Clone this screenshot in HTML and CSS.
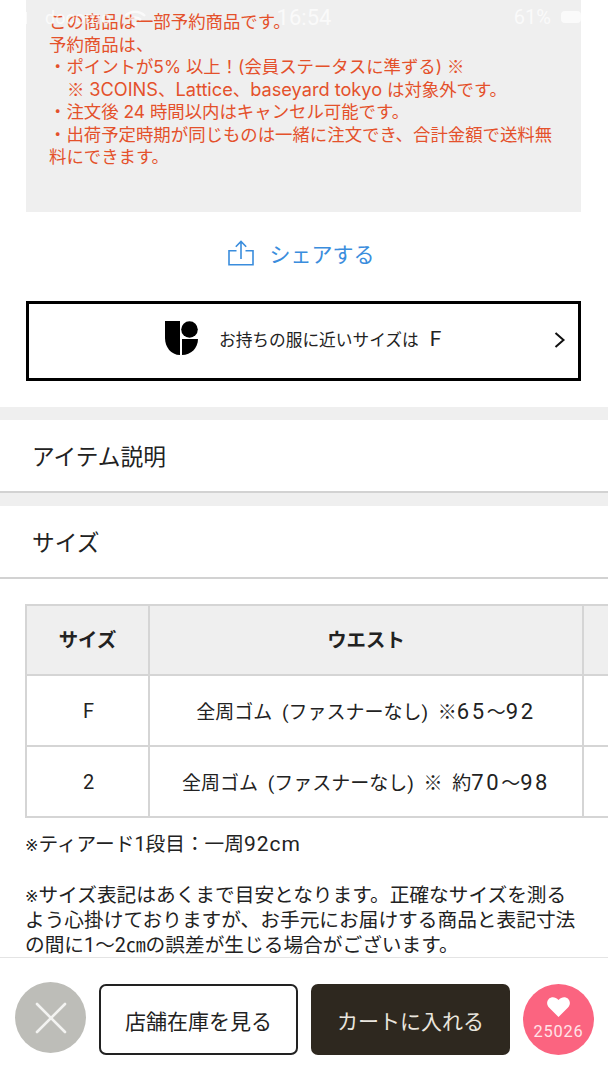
FILE: index.html
```html
<!DOCTYPE html>
<html lang="ja">
  <head>
    <meta charset="UTF-8" />
    <meta name="viewport" content="width=device-width, initial-scale=1.0" />
    <title>商品詳細</title>
    <link rel="stylesheet" href="styles.css">
  </head>
  <body>
    <div class="status">
      <div class="status-left">
        <svg class="signal" width="28" height="12" viewBox="0 0 28 12"><rect x="1" y="7" width="4" height="5" /><rect x="7" y="5" width="4" height="7" /><rect x="13" y="3" width="4" height="9" /><rect x="19" y="0" width="4" height="12" /></svg>
        <span class="carrier">docomo</span>
        <svg class="wifi" width="22" height="16" viewBox="0 0 22 16"><path d="M1 6a14 14 0 0 1 20 0M5 10a8.500 8.500 0 0 1 12 0" fill="none" stroke="#fff" stroke-width="2.500" /><circle cx="11" cy="14" r="2" /></svg>
      </div>
      <div class="status-time">16:54</div>
      <div class="status-right">
        <span>61%</span>
        <div class="battery"></div>
      </div>
    </div>

    <section class="note">
      <p>この商品は一部予約商品です。</p>
      <p>予約商品は、</p>
      <p>・ポイントが5% 以上！(会員ステータスに準ずる) <span class="cjk">※</span></p>
      <p class="indent"><span class="cjk">※</span> <span class="note-latin">3COINS</span>、<span class="note-latin">Lattice</span>、<span class="note-latin">baseyard tokyo</span> は対象外です。</p>
      <p>・注文後 24 時間以内はキャンセル可能です。</p>
      <p>・出荷予定時期が同じものは一緒に注文でき、合計金額で送料無料にできます。</p>
    </section>

    <a class="share">
      <svg width="26" height="26" viewBox="0 0 26 26" fill="none" stroke="#3a8ddd" stroke-width="1.600">
        <path d="M8.500 10.800H1v14h24v-14h-7.500" />
        <path d="M13 19V1.500M7.800 6.700 13 1.500l5.200 5.200" />
      </svg>
      <span>シェアする</span>
    </a>

    <a class="fit">
      <svg class="fit-logo" width="33" height="34" viewBox="0 0 33 34">
        <path d="M0 0H15V34C6 34 0 26 0 17Z" />
        <circle cx="24.500" cy="8.500" r="8.300" />
        <path d="M17 18H33C33 27 26 34 17 34Z" />
      </svg>
      <span class="fit-text">お持ちの服に近いサイズは</span>
      <span class="fit-size">F</span>
      <svg class="fit-arrow" width="12" height="16" viewBox="0 0 12 16" fill="none" stroke="#111" stroke-width="2"><path d="M1.500 1 9.500 8l-8 7" /></svg>
    </a>

    <div class="acc acc-first">アイテム説明</div>
    <div class="acc">サイズ</div>

    <div class="table-wrap">
      <table class="size-table">
        <tr><th class="col-size">サイズ</th><th class="col-waist">ウエスト</th><th></th></tr>
        <tr><td class="size-name">F</td><td>全周ゴム (ファスナーなし) ※<span class="num">65</span>～<span class="num">92</span></td><td></td></tr>
        <tr><td class="size-name">2</td><td>全周ゴム (ファスナーなし) ※ 約<span class="num">70</span>～<span class="num">98</span></td><td></td></tr>
      </table>
    </div>

    <section class="remarks">
      <p><span class="mark">※</span>ティアード1段目：一周<span class="latin">92cm</span></p>
      <p>&nbsp;</p>
      <p><span class="mark">※</span>サイズ表記はあくまで目安となります。正確なサイズを測るよう心掛けておりますが、お手元にお届けする商品と表記寸法の間に1～2㎝の誤差が生じる場合がございます。</p>
    </section>

    <div class="action-bar">
      <button class="close">
        <svg width="32" height="32" viewBox="0 0 32 32" stroke="#f3f3f1" stroke-width="2.600" stroke-linecap="round"><path d="M2 2 30 30M30 2 2 30" /></svg>
      </button>
      <button class="btn btn-store">店舗在庫を見る</button>
      <button class="btn btn-cart">カートに入れる</button>
      <button class="like">
        <svg width="23" height="20" viewBox="0 0 23 20"><path d="M11.500 20 2 10.500C-.5 8-.5 4 2 1.700 4.500-.6 8.500-.4 11.500 3c3-3.400 7-3.600 9.500-1.300 2.500 2.300 2.500 6.300 0 8.800Z" fill="#fff" /></svg>
        <span>25026</span>
      </button>
    </div>
  </body>
</html>
```

FILE: styles.css
```css
* {
  box-sizing: border-box;
}

html,
body {
  margin: 0;
  height: 1080px;
  overflow: hidden;
  background: white;
}

body {
  position: relative;
  font-family: Roboto, "Noto Sans CJK JP", sans-serif;
  color: #222;
}

p {
  margin: 0;
}

/* status bar over the page */
.status {
  position: absolute;
  top: 5px;
  left: 0;
  width: 100%;
  height: 24px;
  color: #fff;
  fill: #fff;
  font-size: 20px;
  opacity: 0.7;
}

.status-left {
  position: absolute;
  left: 4px;
  top: 2px;
  display: flex;
  align-items: center;
  gap: 13px;
}

.carrier {
  font-size: 18px;
}

.status-time {
  position: absolute;
  left: 0;
  width: 100%;
  top: 0;
  text-align: center;
  font-size: 22px;
}

.status-right {
  position: absolute;
  right: 27px;
  top: 0;
  display: flex;
  align-items: center;
  gap: 10px;
}

.battery {
  width: 20px;
  height: 12px;
  border-radius: 4px;
  background: #fff;
}

.note {
  margin: 0 27px 0 26px;
  height: 212px;
  padding: 11px 22px 0 23px;
  background: #efefef;
  color: #e4512b;
  font-family: Inter, "Noto Sans CJK JP", sans-serif;
  font-size: 17.400px;
  line-height: 22.500px;
}

.indent {
  padding-left: 18px;
}

.cjk {
  font-family: "Noto Sans CJK JP", sans-serif;
  line-height: 1;
}

.note-latin {
  font-size: 18.200px;
  line-height: 1;
}

.share {
  height: 89px;
  padding: 0 6px 8px 0;
  display: flex;
  align-items: center;
  justify-content: center;
  gap: 16px;
  color: #3a8ddd;
  font-size: 21px;
}

.fit {
  margin: 0 27px 0 26px;
  height: 80px;
  border: 3px solid #000;
  display: flex;
  align-items: center;
  padding: 0 12px 0 136px;
}

.fit-logo {
  flex: none;
  margin-bottom: 6px;
}

.fit-text {
  margin-left: 21px;
  margin-bottom: 5px;
  font-size: 16.700px;
}

.fit-size {
  margin-left: 11px;
  margin-bottom: 5px;
  font-size: 21px;
}

.fit-arrow {
  margin-left: auto;
  margin-bottom: 2px;
}

.acc {
  height: 86px;
  border-top: 13px solid #efefef;
  border-bottom: 2px solid #d2d2d2;
  padding-left: 32px;
  display: flex;
  align-items: center;
  font-size: 22.700px;
}

.acc-first {
  margin-top: 26px;
}

.table-wrap {
  margin: 25px 0 0 25px;
  overflow: hidden;
}

.size-table {
  width: 700px;
  table-layout: fixed;
  border-collapse: collapse;
  font-size: 19px;
  word-spacing: 5px;
}

.size-table th,
.size-table td {
  height: 71px;
  border: 2px solid #d5d5d5;
  text-align: center;
  padding: 0;
  font-weight: normal;
}

.size-table th {
  height: 70px;
  padding-bottom: 4px;
  background: #efefef;
  font-size: 19.400px;
  font-weight: bold;
}

.size-table .size-name {
  font-size: 20px;
  padding-left: 2px;
}

.num {
  font-size: 22px;
  letter-spacing: 2.600px;
}

.col-size {
  width: 123px;
}

.col-waist {
  width: 434px;
}

.remarks {
  margin: 14px 28px 0 25px;
  font-size: 19.700px;
  line-height: 25.300px;
}

.mark {
  font-family: "DejaVu Sans", sans-serif;
  font-size: 16px;
  line-height: 1;
}

.latin {
  font-size: 21px;
  letter-spacing: 1px;
  line-height: 1;
}

/* bottom buttons stay on top of the content */
.action-bar {
  position: absolute;
  left: 0;
  bottom: 0;
  width: 100%;
  height: 123px;
  padding: 24px 14px 0 15px;
  background: white;
  border-top: 1px solid #e4e4e4;
  display: flex;
  align-items: flex-start;
  gap: 13px;
}

.action-bar button {
  margin: 0;
  padding: 0;
  font-family: inherit;
  cursor: pointer;
}

.close {
  width: 71px;
  height: 71px;
  border: none;
  border-radius: 50%;
  background: #bdbdb8;
  display: flex;
  align-items: center;
  justify-content: center;
}

.btn {
  width: 199px;
  height: 71px;
  margin-top: 2px !important;
  border-radius: 7px;
  font-size: 21px;
}

.btn-store {
  background: white;
  border: 2px solid #222;
  color: #222;
}

.btn-cart {
  background: #2e281f;
  border: none;
  color: #e9e5de;
}

.like {
  width: 71px;
  height: 71px;
  margin-top: 2px !important;
  border: none;
  border-radius: 50%;
  background: #fb6480;
  color: #ffe3e8;
  font-size: 16.400px;
  letter-spacing: 0.800px;
  display: flex;
  flex-direction: column;
  align-items: center;
  padding-top: 13px !important;
  gap: 5px;
}
```
